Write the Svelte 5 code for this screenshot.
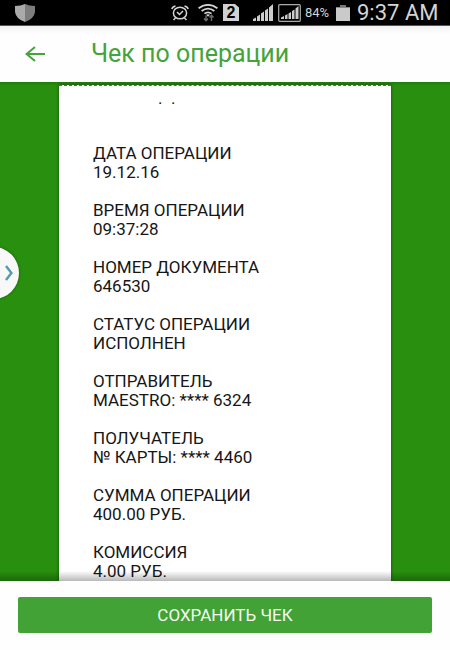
<script>
  const entries = [
    ['ДАТА ОПЕРАЦИИ', '19.12.16'],
    ['ВРЕМЯ ОПЕРАЦИИ', '09:37:28'],
    ['НОМЕР ДОКУМЕНТА', '646530'],
    ['СТАТУС ОПЕРАЦИИ', 'ИСПОЛНЕН'],
    ['ОТПРАВИТЕЛЬ', 'MAESTRO: **** 6324'],
    ['ПОЛУЧАТЕЛЬ', '№ КАРТЫ: **** 4460'],
    ['СУММА ОПЕРАЦИИ', '400.00 РУБ.'],
    ['КОМИССИЯ', '4.00 РУБ.']
  ];
</script>

<div class="screen">
  <div class="status">
    <svg class="shield" width="20" height="18" viewBox="0 0 20 18" aria-hidden="true">
      <path d="M10 0 Q6 2 0 2 V8 Q1 15 10 18 Z" fill="#aaa" />
      <path d="M10 0 Q14 2 20 2 V8 Q19 15 10 18 Z" fill="#7d7d7d" />
    </svg>
    <svg width="18" height="16" viewBox="0 0 18 16" fill="none" stroke="#d4d4d4" aria-hidden="true">
      <ellipse cx="9" cy="8" rx="6.6" ry="5.8" stroke-width="1.5" />
      <path d="M6 7 L8.5 9.5 L12 6" stroke-width="1.5" />
      <path d="M.8 4 Q1.5 1.5 4.5 .9 M17.2 4 Q16.5 1.5 13.5 .9 M4.5 13 L2.5 15 M13.5 13 L15.5 15" stroke-width="1.5" />
    </svg>
    <svg class="wifi" width="20" height="18" viewBox="0 0 20 18" fill="none" stroke="#d4d4d4" aria-hidden="true">
      <path d="M.6 4.3 Q10 -2.6 19.4 4.3 M3.6 7 Q10 2.2 16.4 7 M6.5 9.6 Q10 7 13.5 9.6" stroke-width="1.8" />
      <path d="M8 10.8 Q10 9.6 12 10.8 L10 12.8 Z" fill="#d4d4d4" stroke="none" />
      <path d="M8 11.5 V16.5 M6 14.5 L8 16.7 L10 14.5 M13.5 17 V11.5 M11.5 13.5 L13.5 11.3 L15.5 13.5" stroke="#6d6d6d" stroke-width="1.4" />
    </svg>
    <span class="sim">2</span>
    <svg class="signal" width="20" height="17" viewBox="0 0 20 17" fill="#ccc" aria-hidden="true">
      <path d="M0 17 V15 L3 13.5 V17 Z M4 17 V12.5 L7 10.5 V17 Z M8 17 V9.5 L11 7.5 V17 Z M12 17 V6.5 L15 4.5 V17 Z M16 17 V3.5 L20 0 V17 Z" />
    </svg>
    <svg class="boxed" width="23" height="18" viewBox="0 0 23 18" aria-hidden="true">
      <rect x=".7" y=".7" width="21.6" height="16.6" rx="1" fill="none" stroke="#aaa" stroke-width="1.2" />
      <path d="M3 15 V13.5 L6 12 V15 Z M7 15 V11.5 L9.5 10 V15 Z M10.5 15 V9.5 L13 8 V15 Z M14 15 V7 L16.5 5.5 V15 Z M17.5 15 V4.5 L20.5 2 V15 Z" fill="#ccc" />
    </svg>
    <span class="percent">84%</span>
    <svg class="battery" width="14" height="16" viewBox="0 0 14 16" aria-hidden="true">
      <path d="M4 0 H10 V2 H4 Z" fill="#777" />
      <path d="M0 2 H14 V16 H0 Z" fill="#cacaca" />
      <path d="M0 2 H14 V3 H0 Z" fill="#888" />
    </svg>
    <span class="clock">9:37 AM</span>
  </div>

  <header>
    <button class="back" aria-label="Назад">
      <svg width="20" height="16" viewBox="0 0 20 16" fill="none" stroke="#45a33a" stroke-width="2" aria-hidden="true">
        <path d="M10 1 L1.6 8 L10 15 M1.6 8 H20" />
      </svg>
    </button>
    <h1>Чек по операции</h1>
  </header>

  <main>
    <section class="receipt">
      <p class="dots">.&nbsp; .</p>
      <dl>
        {#each entries as [label, value]}
          <div class="entry">
            <dt>{label}</dt>
            <dd>{value}</dd>
          </div>
        {/each}
      </dl>
    </section>
    <button class="handle" aria-label="Открыть панель">
      <svg width="8" height="16" viewBox="0 0 8 16" fill="none" stroke="#5599ad" stroke-width="2.4" aria-hidden="true">
        <path d="M1 1 L6.4 8 L1 15" />
      </svg>
    </button>
  </main>

  <footer>
    <button class="save">СОХРАНИТЬ ЧЕК</button>
  </footer>
</div>

<style>
  .screen {
    display: flex;
    flex-direction: column;
    height: 100vh;
    background: #fff;
    font-family: Roboto, 'Liberation Sans', sans-serif;
  }
  .screen * {
    box-sizing: border-box;
  }
  svg {
    display: block;
    flex: none;
  }
  button {
    border: 0;
    padding: 0;
    font: inherit;
    cursor: pointer;
  }
  .status {
    flex: none;
    display: flex;
    align-items: center;
    height: 26px;
    padding: 0 10px 0 15px;
    background: #000;
    border-bottom: 1px solid #555;
    color: #d4d4d4;
    white-space: nowrap;
  }
  .shield {
    margin-right: auto;
  }
  .wifi {
    margin-left: 9px;
  }
  .sim {
    width: 16px;
    height: 17px;
    margin-left: 5px;
    background: #d0d0d0;
    clip-path: polygon(0 0, 75% 0, 100% 20%, 100% 100%, 0 100%);
    color: #000;
    font: bold 16px/18px 'Liberation Sans', sans-serif;
    text-align: center;
  }
  .signal {
    margin-left: 14px;
  }
  .boxed {
    margin-left: 5px;
  }
  .percent {
    margin-left: 4px;
    width: 27px;
    font: 13px/24px Roboto, sans-serif;
  }
  .battery {
    margin-left: 4px;
  }
  .clock {
    width: 83px;
    margin-left: 7px;
    font: 22px/24px Roboto, sans-serif;
  }
  header {
    flex: none;
    display: flex;
    align-items: center;
    height: 56px;
    padding: 0 25px;
    background: linear-gradient(#f2f2f2, #fefefe 8px);
  }
  .back {
    width: 66px;
    height: 40px;
    background: none;
    text-align: left;
  }
  h1 {
    margin: 0;
    color: #45a33a;
    font-size: 25px;
    line-height: 32px;
    font-weight: 400;
    white-space: nowrap;
  }
  main {
    position: relative;
    flex: 1;
    min-height: 0;
    overflow: hidden;
    padding: 3px 59px 0;
    background: linear-gradient(#1e7c0c, #28900e 4px);
  }
  main::after {
    content: '';
    position: absolute;
    inset: auto 0 0;
    height: 10px;
    background: linear-gradient(transparent, rgba(0, 0, 0, 0.28));
  }
  .receipt {
    min-height: 100%;
    padding: 3px 34px 0;
    background: #fff;
    border-top: 1px dashed #28900e;
    box-shadow: 0 0 3px rgba(0, 0, 0, 0.5);
    color: #161616;
    font-size: 17px;
    line-height: 19px;
    white-space: nowrap;
  }
  .dots {
    margin: 0;
    padding-left: 65px;
  }
  dl {
    margin: 36px 0 0;
  }
  .entry {
    margin-bottom: 19px;
  }
  dd {
    margin: 0;
  }
  .handle {
    position: absolute;
    left: -32px;
    top: 165px;
    display: flex;
    align-items: center;
    justify-content: flex-end;
    width: 51px;
    height: 52px;
    padding-right: 6px;
    border-radius: 50%;
    background: #f8f8f8;
    box-shadow: 0 0 3px rgba(0, 0, 0, 0.4);
  }
  footer {
    flex: none;
    padding: 16px 18px 17px;
    background: #fefefe;
  }
  .save {
    display: block;
    width: 100%;
    height: 36px;
    border-radius: 2px;
    background: #42a235;
    color: #f4fbf2;
    font-size: 17px;
    line-height: 36px;
  }
</style>
